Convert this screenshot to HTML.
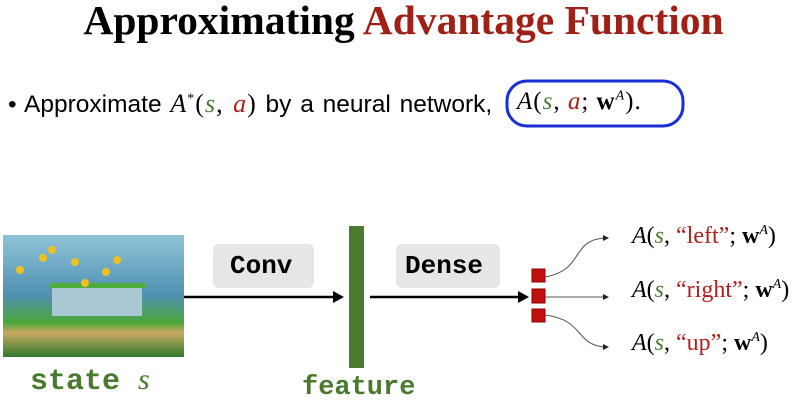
<!DOCTYPE html><html><head><style>
body{margin:0;width:807px;height:404px;background:#fff;position:relative;overflow:hidden;font-family:"Liberation Serif",serif}
.a{position:absolute;white-space:nowrap}
.g{color:#4a7a2e}.r{color:#b0201c}
sup{font-size:14px}
</style></head><body>
<div class="a" style="left:0;width:807px;top:-4px;text-align:center;font-size:41.5px;font-weight:bold">Approximating <span style="color:#9e2016">Advantage Function</span></div>
<div class="a" style="left:8px;top:89px;font-family:'Liberation Sans',sans-serif;font-size:24.5px;word-spacing:2px">• Approximate <span style="font-family:'Liberation Serif';font-size:26px;letter-spacing:1px"><i>A</i><sup>*</sup>(<i class="g">s</i>, <i class="r">a</i>)</span> by a neural network,</div>
<div class="a" style="left:517px;top:88px;font-size:25px;letter-spacing:1px"><i>A</i>(<i class="g">s</i>, <i class="r">a</i>; <b>w</b><sup><i>A</i></sup>).</div>
<svg class="a" style="left:0;top:0" width="807" height="404">
<rect x="507" y="81" width="176" height="45" rx="20" fill="none" stroke="#1a2fd6" stroke-width="3"/>
<defs><linearGradient id="sk" x1="0" y1="0" x2="0" y2="1"><stop offset="0" stop-color="#8fc4d8"/><stop offset=".5" stop-color="#4f8fb0"/><stop offset=".72" stop-color="#4aa838"/><stop offset=".8" stop-color="#c9a860"/><stop offset="1" stop-color="#2e7a2a"/></linearGradient></defs>
<rect x="3" y="235" width="181" height="122" fill="url(#sk)"/>
<rect x="52" y="286" width="90" height="30" fill="#a9c8d4"/>
<rect x="50" y="283" width="95" height="5" fill="#4cad3a"/>
<g fill="#f0c020"><circle cx="43" cy="258" r="4"/><circle cx="52" cy="250" r="4"/><circle cx="75" cy="262" r="4"/><circle cx="85" cy="283" r="4"/><circle cx="20" cy="270" r="4"/><circle cx="117" cy="260" r="4"/><circle cx="106" cy="272" r="4"/></g>
<rect x="213" y="244" width="101" height="44" rx="6" fill="#e6e6e6"/>
<rect x="396" y="244" width="104" height="44" rx="6" fill="#e6e6e6"/>
<line x1="184" y1="297" x2="338" y2="297" stroke="#000" stroke-width="2.5"/><path d="M333 291 L344 297 L333 303Z"/>
<line x1="370" y1="297" x2="522" y2="297" stroke="#000" stroke-width="2.5"/><path d="M518 291 L529 297 L518 303Z"/>
<rect x="349" y="226" width="15" height="142" fill="#4c7a2f"/>
<g fill="#c01010" stroke="#8a0000"><rect x="532" y="269" width="13" height="13"/><rect x="532" y="289" width="13" height="14"/><rect x="532" y="309" width="13" height="13"/></g>
<g fill="none" stroke="#555" stroke-width="1"><path d="M545 277 C585 270 570 240 605 238"/><path d="M545 297 L605 297"/><path d="M545 315 C585 320 575 345 605 347"/></g>
<g fill="#222"><path d="M603 235 L609 238 L603 241Z"/><path d="M603 294 L609 297 L603 300Z"/><path d="M603 344 L609 347 L603 350Z"/></g>
</svg>
<div class="a" style="left:230px;top:251px;font-family:'Liberation Mono',monospace;font-weight:bold;font-size:26px">Conv</div>
<div class="a" style="left:405px;top:251px;font-family:'Liberation Mono',monospace;font-weight:bold;font-size:26px">Dense</div>
<div class="a g" style="left:30px;top:363px;font-family:'Liberation Mono',monospace;font-weight:bold;font-size:30px">state <i style="font-family:'Liberation Serif';font-weight:normal">s</i></div>
<div class="a g" style="left:302px;top:373px;font-family:'Liberation Mono',monospace;font-weight:bold;font-size:27px">feature</div>
<div class="a" style="left:632px;top:223px;font-size:24px"><i>A</i>(<i class="g">s</i>, <span class="r">“left”</span>; <b>w</b><sup><i>A</i></sup>)</div>
<div class="a" style="left:632px;top:277px;font-size:24px"><i>A</i>(<i class="g">s</i>, <span class="r">“right”</span>; <b>w</b><sup><i>A</i></sup>)</div>
<div class="a" style="left:632px;top:330px;font-size:24px"><i>A</i>(<i class="g">s</i>, <span class="r">“up”</span>; <b>w</b><sup><i>A</i></sup>)</div>
</body></html>
